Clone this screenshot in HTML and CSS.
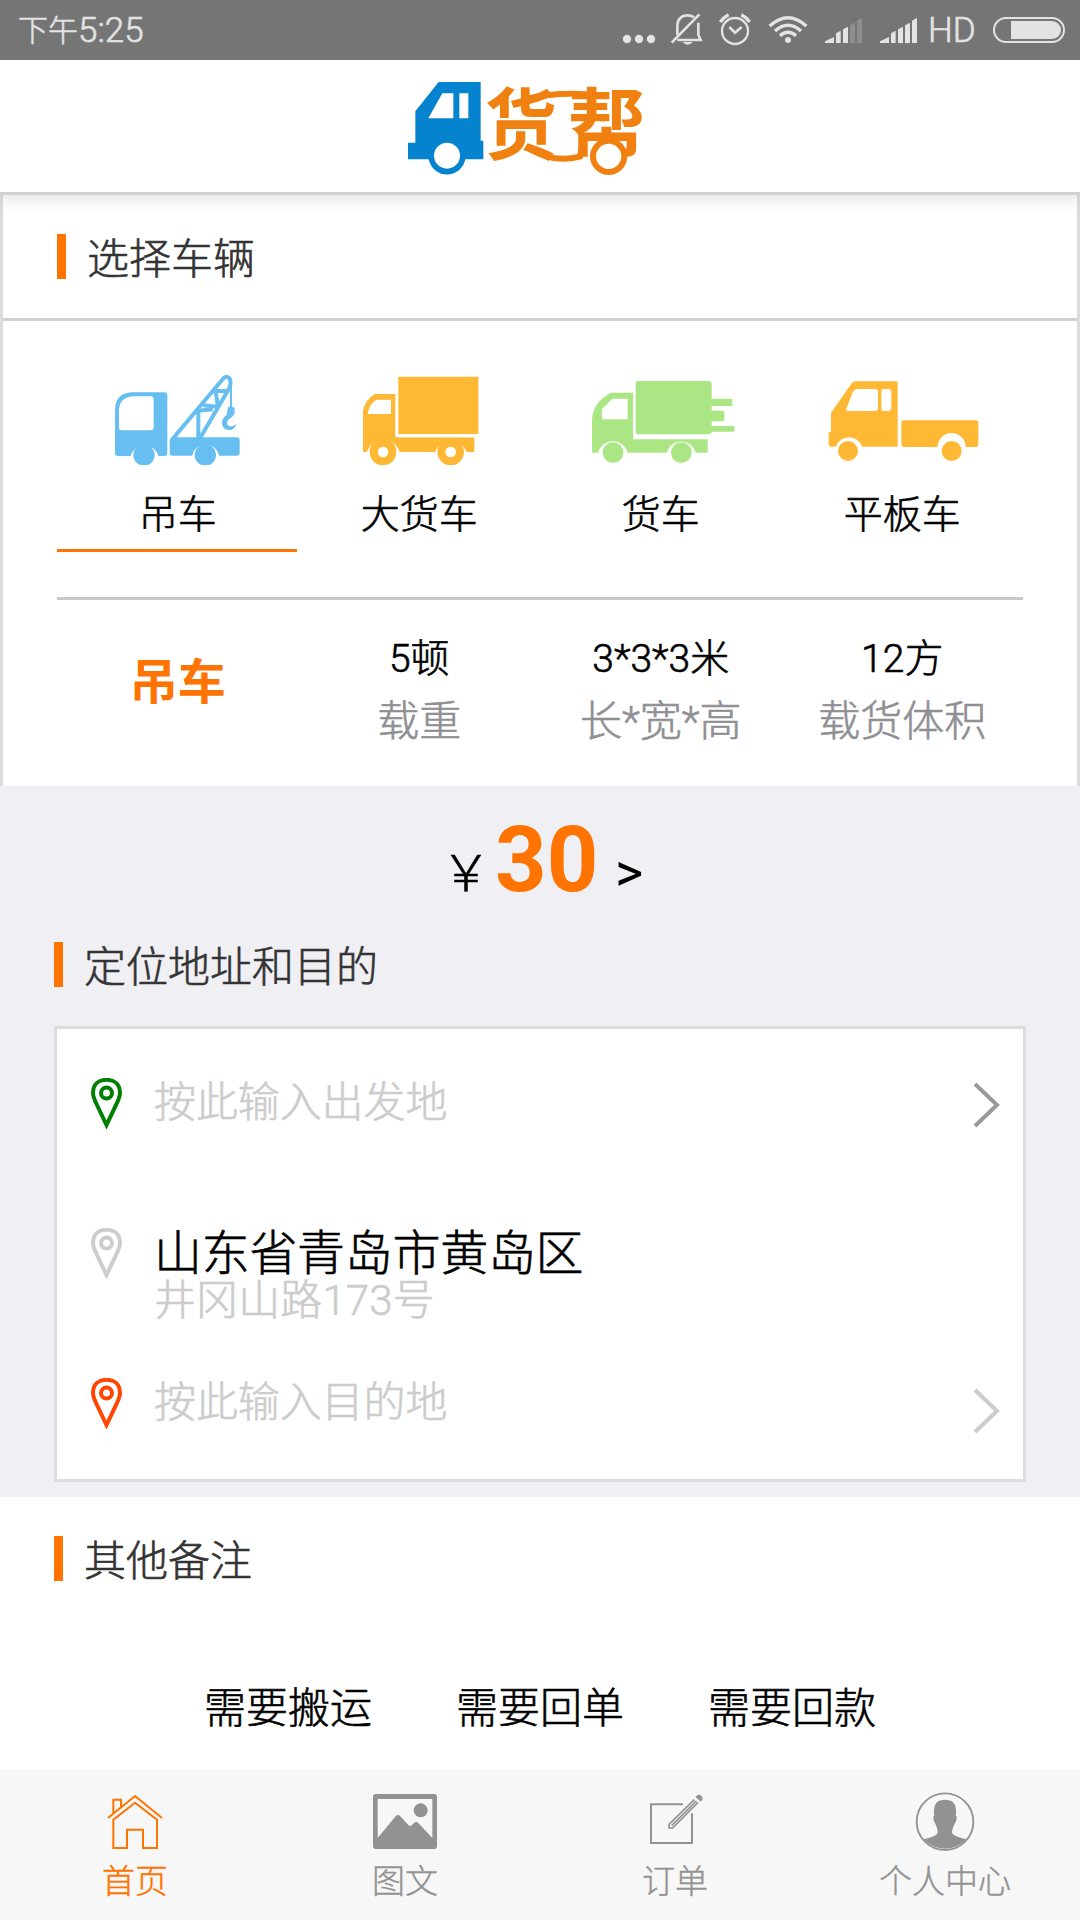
FILE: index.html
```html
<!DOCTYPE html>
<html lang="zh-CN">
<head>
<meta charset="utf-8">
<title>货帮</title>
<link rel="stylesheet" href="styles.css">
</head>
<body>
<div class="app">
  <div class="statusbar">
    <div class="clock"><span class="ampm">下午</span><span>5:25</span></div>
    <div class="status-icons">
      <svg width="317" height="60" viewBox="0 0 951 180" fill="none" stroke="#e3e3e3">
        <g fill="#e3e3e3" stroke="none"><circle cx="81" cy="117" r="12.5"/><circle cx="117" cy="117" r="12.5"/><circle cx="153" cy="117" r="12.5"/></g>
        <path d="M232 104V78c0-20 13-32 30-32 8 0 15 2 20 6M295 68v36l7 16H232M215 128L298 43" stroke-width="8"/>
        <path d="M247 126h32q-16 16-32 0z" fill="#e3e3e3" stroke="none"/>
        <circle cx="405" cy="93" r="39" stroke-width="7"/>
        <path d="M388 81l17 17 20-17" stroke-width="8"/>
        <path d="M361 66q9-14 25-22M424 44q16 8 25 22" stroke-width="10"/>
        <path d="M509 78q55-50 110 0M525 93q39-35 78 0M540 107q24-20 48 0" stroke-width="10"/>
        <circle cx="564" cy="120" r="9" fill="#e3e3e3" stroke="none"/>
        <g fill="#e3e3e3" stroke="none">
          <path d="M675 129v-5l27-13v18zM708 129v-29l14-8v37zM729 129v-41l15-8v49z"/>
          <path d="M750 129V76l15-8v61zM771 129V62l15-9v76z" fill="#8e8e8e"/>
          <path d="M840 129v-5l27-13v18zM873 129v-29l14-8v37zM894 129v-41l15-8v49zM915 129V76l15-8v61zM936 129V62l15-9v76z"/>
        </g>
      </svg>
      <span class="hd">HD</span>
      <svg width="72" height="26" viewBox="0 0 72 26"><rect x="1" y="1" width="70" height="24" rx="12" fill="none" stroke="#e3e3e3" stroke-width="2"/><path d="M18 4h41a9 9 0 0 1 0 18H18z" fill="#e3e3e3"/></svg>
    </div>
  </div>

  <header class="header">
    <svg class="logo" width="237" height="96" viewBox="54 60 711 288">
      <path fill="#0583cf" d="M146 66H272V242H280V298H226A56 56 0 0 1 116 298H54V248H76V154z"/>
      <path fill="#fff" d="M157 100H190V175H115zM208 100h27v75h-27z"/>
      <circle cx="171" cy="287" r="39" fill="#fff"/>
      <g fill="#f08010">
        <text class="logo-text" x="284" y="283" textLength="216" lengthAdjust="spacingAndGlyphs">货</text>
        <text class="logo-text" x="534" y="283" textLength="232" lengthAdjust="spacingAndGlyphs">帮</text>
      </g>
      <path d="M410 116Q500 96 590 103M422 268Q490 310 570 290L580 240" fill="none" stroke="#f08010" stroke-width="18"/>
      <circle cx="656" cy="289" r="47" fill="#fff" stroke="#f08010" stroke-width="18"/>
    </svg>
  </header>

  <section class="vehicles">
    <div class="vehicles-head"><h2 class="title">选择车辆</h2></div>
    <div class="tabs">
      <div class="tab active">
        <svg width="125" height="90" viewBox="75 75 375 270" fill="#67bef0">
          <path fill-rule="evenodd" d="M125 127H223q9 0 9 9V309q0 9-9 9H205A43 43 0 0 0 122 318H84q-9 0-9-9V177Q77 130 125 127zM130 139Q88 142 87 182V232q0 9 9 9H182q9 0 9-9V148q0-9-9-9z"/>
          <circle cx="162" cy="315" r="32"/><circle cx="346" cy="315" r="32"/>
          <path d="M239 270L248 262H440q9 0 9 9V308q0 9-9 9H388A42 42 0 0 0 306 317H248q-9 0-9-9z"/>
          <path fill="none" stroke="#67bef0" stroke-width="12" d="M245 270L396 90Q410 72 420 88 424 100 418 114L330 265M325 176V264M325 182L368 178M340 166L380 170M376 116L383 165M380 122L412 124"/>
          <path fill="none" stroke="#67bef0" stroke-width="6" d="M423 98V175"/>
          <path d="M414 172q10-6 20 2v14q-4 12-18 20-8 8-2 18 10 9 24-4-4 18-20 18-22-2-22-22 0-12 14-24z"/>
        </svg>
        <span>吊车</span>
      </div>
      <div class="tab">
        <svg width="120" height="90" viewBox="808 75 360 270" fill="#feb834">
          <path d="M926 80H1166V253H926z"/>
          <path fill-rule="evenodd" d="M856 132H917V262H1154V306H1131A50 50 0 0 0 1036 306H930A51 51 0 0 0 832 306H820V184Q824 150 856 132zM860 149Q838 164 834 192H904V149z"/>
          <path stroke="#fff" stroke-width="9" d="M926 257H1166"/>
          <circle cx="880" cy="306" r="28" fill="#fff" stroke="#feb834" stroke-width="24"/><circle cx="1083" cy="306" r="28" fill="#fff" stroke="#feb834" stroke-width="24"/>
        </svg>
        <span>大货车</span>
      </div>
      <div class="tab">
        <svg width="152" height="90" viewBox="74 75 456 270" fill="#aae784">
          <rect x="226" y="93" width="228" height="160" rx="9"/>
          <path d="M452 146h64v22h-64zM452 182h40v32h-40zM452 228h70v17h-70z"/>
          <path fill-rule="evenodd" d="M152 128H218V268H442V308H406A45 45 0 0 0 319 308H202A46 46 0 0 0 113 308H95V210Q97 156 152 128zM156 146L125 177V208H202V146z"/>
          <circle cx="158" cy="308" r="31"/><circle cx="363" cy="308" r="31"/>
        </svg>
        <span>货车</span>
      </div>
      <div class="tab">
        <svg width="156" height="90" viewBox="793 75 468 270" fill="#feb834">
          <path fill-rule="evenodd" d="M890 94H1014V290H907A41 41 0 0 0 829 290H815q-8 0-8-8V246H814V188L872 106Q878 94 890 94zM892 117q-8 0-12 8L860 176q-2 7 7 7H947q8 0 8-8V125q0-8-8-8zM971 117q-6 0-6 7V177q0 6 6 6H982q13 0 13-10V127q0-10-9-10z"/>
          <path d="M1033 211H1248q8 0 8 8V283q0 8-8 8H1218A42 42 0 0 0 1134 291H1033q-8 0-8-8V219q0-8 8-8z"/>
          <circle cx="865" cy="303" r="30"/><circle cx="1176" cy="303" r="30"/>
        </svg>
        <span>平板车</span>
      </div>
    </div>
    <div class="specs">
      <div class="spec-name">吊车</div>
      <div class="spec"><b>5顿</b><span>载重</span></div>
      <div class="spec"><b>3*3*3米</b><span>长*宽*高</span></div>
      <div class="spec"><b>12方</b><span>载货体积</span></div>
    </div>
  </section>

  <section class="route">
    <div class="price"><span class="yen">&#xFFE5;</span><span class="amount">30</span><span class="more">&gt;</span></div>
    <h2 class="title">定位地址和目的</h2>
    <div class="card">
      <div class="stop from">
        <svg class="pin" width="31" height="51" viewBox="0 0 31 51"><path d="M2 15C2 6 8 1.800 15.500 1.800S29 6 29 15c0 4-2 8-4 12l-9.500 20L6 27C4 23 2 19 2 15z"/><circle cx="15.500" cy="15" r="5.500"/></svg>
        <span class="hint">按此输入出发地</span>
        <svg class="chev" width="27" height="46" viewBox="0 0 27 46"><path d="M2 2L24 23 2 44"/></svg>
      </div>
      <div class="stop here">
        <svg class="pin" width="31" height="51" viewBox="0 0 31 51"><path d="M2 15C2 6 8 1.800 15.500 1.800S29 6 29 15c0 4-2 8-4 12l-9.500 20L6 27C4 23 2 19 2 15z"/><circle cx="15.500" cy="15" r="5.500"/></svg>
        <div class="addr"><strong>山东省青岛市黄岛区</strong><span class="hint">井冈山路173号</span></div>
      </div>
      <div class="stop to">
        <svg class="pin" width="31" height="51" viewBox="0 0 31 51"><path d="M2 15C2 6 8 1.800 15.500 1.800S29 6 29 15c0 4-2 8-4 12l-9.500 20L6 27C4 23 2 19 2 15z"/><circle cx="15.500" cy="15" r="5.500"/></svg>
        <span class="hint">按此输入目的地</span>
        <svg class="chev" width="27" height="46" viewBox="0 0 27 46"><path d="M2 2L24 23 2 44"/></svg>
      </div>
    </div>
  </section>

  <section class="notes">
    <h2 class="title">其他备注</h2>
    <div class="options"><span>需要搬运</span><span>需要回单</span><span>需要回款</span></div>
  </section>

  <nav class="tabbar">
    <a class="nav current">
      <svg width="60" height="60" viewBox="75 96 180 180" fill="none" stroke="#ff7300" stroke-width="6"><path d="M84 174L165 108 246 174M100 160V119H123V141M100 264V179L165 128 231 179V264H189V209H141V264z"/></svg>
      <span>首页</span>
    </a>
    <a class="nav">
      <svg width="64" height="60" viewBox="879 96 192 180" fill="#929292"><path fill-rule="evenodd" d="M888 102H1062q9 0 9 9V258q0 9-9 9H888q-9 0-9-9V111q0-9 9-9zM893 117V234L947 169q7-8 14 0L986 196q4 4 9 0L1003 188q6-5 12 1L1057 234V117z"/><circle cx="1022" cy="151" r="21"/></svg>
      <span>图文</span>
    </a>
    <a class="nav">
      <svg width="60" height="60" viewBox="135 96 180 180" fill="none" stroke="#929292" stroke-width="6"><path d="M249 133H153V249H276V160"/><path d="M283 119L207 193V204H218L294 127M215 197L289 123" stroke-width="5"/><path d="M289 111q7-9 14-2 6 7-1 13z" fill="#929292" stroke-width="4"/></svg>
      <span>订单</span>
    </a>
    <a class="nav">
      <svg width="60" height="60" viewBox="945 96 180 180" fill="#929292"><circle cx="1035" cy="185" r="85" fill="none" stroke="#929292" stroke-width="5.500"/><path d="M971 238Q1012 228 1013 218 1014 208 1006 191 999 180 1000 170L1003 166Q996 119 1035 119T1067 166L1070 170Q1071 180 1064 191 1055 208 1056 218 1058 228 1099 238A86 86 0 0 1 971 238z"/></svg>
      <span>个人中心</span>
    </a>
  </nav>
</div>
</body>
</html>
```
FILE: styles.css
```css
* { box-sizing: border-box; }
body { margin: 0; background: #fff; }
svg { display: block; flex: none; }
h2 { margin: 0; font-weight: 300; }
.app {
  width: 1080px; height: 1920px; display: flex; flex-direction: column; overflow: hidden;
  font-family: Roboto, "Noto Sans CJK SC", sans-serif; font-weight: 300; color: #000; background: #fff;
  -webkit-text-stroke: .6px currentColor;
}
.statusbar {
  height: 60px; flex: none; background: #757575; color: #e3e3e3; display: flex;
  justify-content: space-between; align-items: center; padding: 0 15px 0 18px;
}
.clock { font-size: 35px; line-height: 60px; display: flex; padding-top: 2px; }
.ampm { font-size: 30px; }
.status-icons { display: flex; align-items: center; }
.hd { font-size: 35px; line-height: 60px; width: 76px; flex: none; padding: 2px 0 0 11px; }

.header {
  height: 135px; flex: none; border-bottom: 3px solid #d0d0d0; padding: 20px 0 0 408px;
  box-shadow: 0 3px 15px rgba(0,0,0,.14); z-index: 1; clip-path: inset(0 0 -30px 0); background: #fff;
}
.logo { overflow: visible; -webkit-text-stroke: 0; }
.logo-text { font-family: "Noto Sans CJK SC", sans-serif; font-weight: 700; font-size: 236px; }

.vehicles { height: 591px; flex: none; border: solid #dcdcdc; border-width: 0 3px; }
.vehicles-head { height: 126px; border-bottom: 3px solid #d0d0d0; padding: 39px 0 0 54px; }
.title {
  border-left: 9px solid #ff7300; height: 45px; line-height: 51px; padding-left: 21px;
  font-size: 42px; color: #333;
}
.tabs {
  margin: 0 54px; height: 279px; padding-top: 54px; border-bottom: 3px solid #c8c8c8;
  display: grid; grid-template-columns: repeat(4, 1fr); align-items: start;
}
.tab { height: 177px; display: flex; flex-direction: column; align-items: center; border-bottom: 3px solid transparent; }
.tab.active { border-color: #ff7300; margin-right: 2px; padding-left: 2px; }
.tab span { font-size: 39px; line-height: 50px; margin-top: 25px; }
.specs { margin: 0 54px; display: grid; grid-template-columns: repeat(4, 1fr); text-align: center; padding-top: 32px; }
.spec-name { font-size: 48px; font-weight: 700; color: #ff7300; line-height: 102px; -webkit-text-stroke: 0; }
.spec { display: flex; flex-direction: column; }
.spec b { font-size: 39px; line-height: 54px; font-weight: 300; }
.spec span { font-size: 42px; line-height: 72px; color: #8f8f94; }

.route { height: 711px; flex: none; background: #efeff4; padding: 0 54px; }
.price { height: 156px; display: flex; align-items: baseline; padding-left: 387px; line-height: 150px; }
.yen { font-family: "Noto Sans CJK SC", sans-serif; font-size: 50px; width: 54px; }
.amount { font-size: 90px; font-weight: 700; color: #ff7300; width: 120px; -webkit-text-stroke: 0; }
.more { font-size: 54px; font-weight: 400; -webkit-text-stroke: 0; }
.card { margin-top: 39px; height: 456px; border: 3px solid #dcdcdc; background: #fff; padding: 49px 23px 0 34px; }
.stop { display: flex; align-items: flex-start; height: 150px; }
.pin { margin-right: 32px; fill: none; stroke: #ccc; stroke-width: 4; }
.from .pin { stroke: #008000; }
.to .pin { stroke: #ff4500; }
.hint { font-size: 42px; line-height: 50px; letter-spacing: -.1px; color: #ccc; flex: 1; }
.chev { margin-top: 4px; fill: none; stroke: #999; stroke-width: 4; }
.to .chev { margin-top: 10px; stroke: #ccc; }
.addr { display: flex; flex-direction: column; }
.addr strong { font-size: 48px; line-height: 52px; font-weight: 300; letter-spacing: -.3px; }
.addr .hint { flex: none; line-height: 41px; letter-spacing: .1px; }

.notes { height: 273px; flex: none; padding: 39px 54px 0; }
.options { display: flex; justify-content: center; gap: 84px; font-size: 42px; line-height: 50px; margin-top: 103px; }

.tabbar { height: 150px; flex: none; background: #f7f7f7; display: grid; grid-template-columns: repeat(4, 1fr); }
.nav { display: flex; flex-direction: column; align-items: center; padding-top: 22px; color: #929292; }
.nav span { font-size: 33px; line-height: 40px; margin-top: 10px; -webkit-text-stroke-width: .4px; }
.nav.current { color: #ff7300; }
```
